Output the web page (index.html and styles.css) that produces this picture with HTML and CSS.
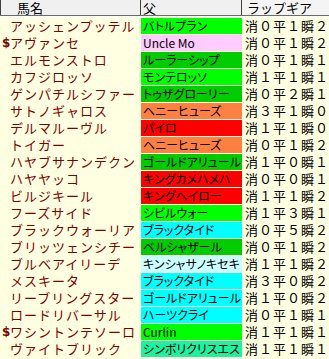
FILE: index.html
```html
<!DOCTYPE html>
<html lang="ja">
<head>
<meta charset="utf-8">
<link rel="stylesheet" href="styles.css">
</head>
<body>
<div class="table">
  <div class="head">
    <div class="hc h1">馬名</div>
    <div class="hc h2">父</div>
    <div class="hc h3">ラップギア</div>
  </div>
  <div class="hline"></div>
  <div class="rows">
    <div class="row"><div class="name"><span class="mk"></span>アッシェンプッテル</div><div class="sire c-lime">バトルプラン</div><div class="gear">消０平１瞬２</div></div>
    <div class="row"><div class="name"><span class="mk">$</span>アヴァンセ</div><div class="sire c-pink">Uncle Mo</div><div class="gear">消０平１瞬２</div></div>
    <div class="row"><div class="name"><span class="mk"></span>エルモンストロ</div><div class="sire c-green">ルーラーシップ</div><div class="gear">消０平１瞬１</div></div>
    <div class="row"><div class="name"><span class="mk"></span>カフジロッソ</div><div class="sire c-lime">モンテロッソ</div><div class="gear">消１平１瞬１</div></div>
    <div class="row"><div class="name"><span class="mk"></span>ゲンパチルシファー</div><div class="sire c-green">トゥザグローリー</div><div class="gear">消０平２瞬１</div></div>
    <div class="row"><div class="name"><span class="mk"></span>サトノギャロス</div><div class="sire c-orange">ヘニーヒューズ</div><div class="gear">消３平１瞬０</div></div>
    <div class="row"><div class="name"><span class="mk"></span>デルマルーヴル</div><div class="sire c-red">パイロ</div><div class="gear">消１平１瞬０</div></div>
    <div class="row"><div class="name"><span class="mk"></span>トイガー</div><div class="sire c-orange">ヘニーヒューズ</div><div class="gear">消０平１瞬２</div></div>
    <div class="row"><div class="name"><span class="mk"></span>ハヤブサナンデクン</div><div class="sire c-green">ゴールドアリュール</div><div class="gear">消１平０瞬１</div></div>
    <div class="row"><div class="name"><span class="mk"></span>ハヤヤッコ</div><div class="sire c-red">キングカメハメハ</div><div class="gear">消０平０瞬１</div></div>
    <div class="row"><div class="name"><span class="mk"></span>ビルジキール</div><div class="sire c-red">キングヘイロー</div><div class="gear">消１平１瞬２</div></div>
    <div class="row"><div class="name"><span class="mk"></span>フーズサイド</div><div class="sire c-lime">シビルウォー</div><div class="gear">消１平３瞬１</div></div>
    <div class="row"><div class="name"><span class="mk"></span>ブラックウォーリア</div><div class="sire c-cyan">ブラックタイド</div><div class="gear">消０平５瞬２</div></div>
    <div class="row"><div class="name"><span class="mk"></span>ブリッツェンシチー</div><div class="sire c-green">ベルシャザール</div><div class="gear">消０平１瞬２</div></div>
    <div class="row"><div class="name"><span class="mk"></span>ブルベアイリーデ</div><div class="sire c-pale">キンシャサノキセキ</div><div class="gear">消１平１瞬２</div></div>
    <div class="row"><div class="name"><span class="mk"></span>メスキータ</div><div class="sire c-cyan">ブラックタイド</div><div class="gear">消３平０瞬２</div></div>
    <div class="row"><div class="name"><span class="mk"></span>リーブリングスター</div><div class="sire c-cyan">ゴールドアリュール</div><div class="gear">消１平０瞬２</div></div>
    <div class="row"><div class="name"><span class="mk"></span>ロードリバーサル</div><div class="sire c-cyan">ハーツクライ</div><div class="gear">消０平１瞬１</div></div>
    <div class="row"><div class="name"><span class="mk">$</span>ワシントンテソーロ</div><div class="sire c-lime">Curlin</div><div class="gear">消１平１瞬１</div></div>
    <div class="row"><div class="name"><span class="mk"></span>ヴァイトブリック</div><div class="sire c-spring">シンボリクリスエス</div><div class="gear">消１平１瞬１</div></div>
  </div>
</div>
</body>
</html>
```

FILE: styles.css
```css
html, body {
  margin: 0;
  padding: 0;
}
body {
  background: #ffffe1;
  width: 329px;
  height: 359px;
  overflow: hidden;
  font-family: "Noto Sans CJK JP", "Noto Sans", sans-serif;
}
.table {
  display: flex;
  flex-direction: column;
}
.head {
  display: grid;
  grid-template-columns: 141px 101px 87px;
  height: 15px;
  background: #f0f0f0;
  border-bottom: 1px solid #6b6b6b;
}
.hline {
  height: 1px;
  background: #ffffff;
}
.hc {
  font-size: 13px;
  line-height: 15px;
  color: #000;
  white-space: nowrap;
  overflow: hidden;
}
.h1 {
  border-left: 1px solid #404040;
  border-right: 1px solid #404040;
  padding-left: 16px;
}
.h2 {
  border-right: 1px solid #404040;
  padding-left: 2px;
}
.h3 {
  padding-left: 5px;
  background: #f4f4f4;
}
.rows {
  display: flex;
  flex-direction: column;
}
.row {
  display: grid;
  grid-template-columns: 141px 101px 87px;
  padding-top: 1px;
  height: 16px;
}
.name {
  display: flex;
  align-items: center;
  padding-left: 2px;
  font-size: 13px;
  line-height: 16px;
  letter-spacing: 1px;
  color: #800000;
  white-space: nowrap;
  overflow: hidden;
}
.mk {
  display: inline-block;
  width: 8px;
  letter-spacing: 0;
  font-family: "DejaVu Sans", sans-serif;
  font-size: 12px;
  font-weight: bold;
}
.sire {
  font-size: 12px;
  line-height: 16px;
  padding-left: 2px;
  color: #000;
  white-space: nowrap;
  overflow: hidden;
  font-feature-settings: "palt";
}
.gear {
  font-size: 13px;
  line-height: 16px;
  letter-spacing: 1px;
  padding-left: 3px;
  color: #000;
  white-space: nowrap;
  overflow: hidden;
}
.c-lime { background: #00ff00; }
.c-green { background: #00cc00; }
.c-pink { background: #ffccff; }
.c-orange { background: #ff8040; }
.c-red { background: #ff0000; }
.c-cyan { background: #00ffff; }
.c-pale { background: #ccffff; }
.c-spring { background: #1ef2a0; }
```
